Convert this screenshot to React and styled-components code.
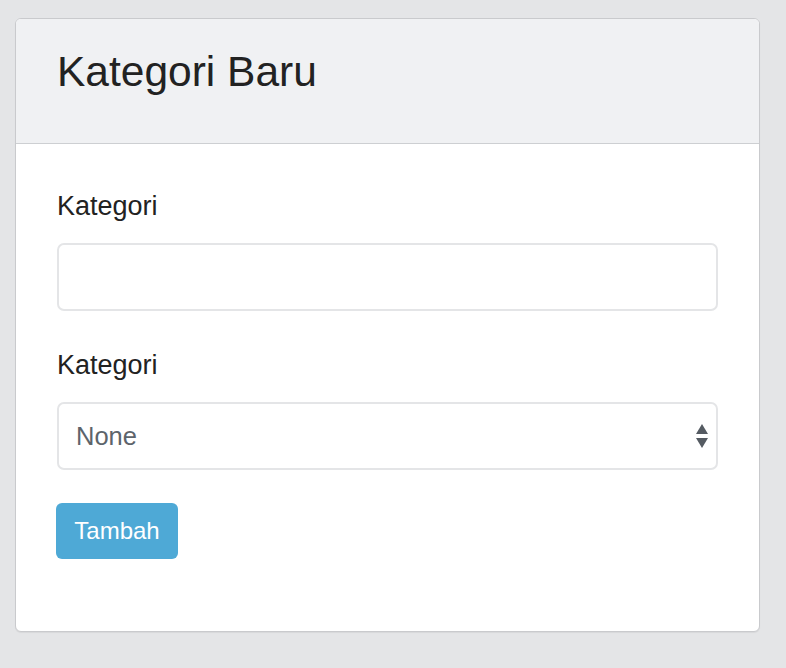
import React from 'react';
import styled, { createGlobalStyle } from 'styled-components';

const GlobalStyle = createGlobalStyle`
  html, body {
    margin: 0;
    padding: 0;
    background-color: #e4e5e7;
    font-family: "Liberation Sans", Arial, sans-serif;
    color: #212529;
  }
`;

const Page = styled.div`
  padding: 18px 26px 35px 15px;
`;

const Card = styled.div`
  width: 745px;
  box-sizing: border-box;
  background-color: white;
  border: 1px solid #c9cacd;
  border-radius: 6px;
  box-shadow: 0 1px 1px rgba(0, 0, 0, 0.06);
  overflow: hidden;
`;

const CardHeader = styled.div`
  height: 125px;
  box-sizing: border-box;
  padding: 27px 41px 0;
  background-color: #f0f1f3;
  border-bottom: 1px solid #cdcfd2;
`;

const Title = styled.h3`
  margin: 0;
  font-size: 42.5px;
  font-weight: 400;
  line-height: 1.2;
  color: #222;
`;

const CardBody = styled.div`
  padding: 43px 41px 72px;
`;

const FormGroup = styled.div`
  margin-bottom: ${props => props.last ? '33px' : '35px'};
`;

const Label = styled.label`
  display: block;
  font-size: 27px;
  line-height: 39px;
  margin-bottom: 17px;
  color: #222;
`;

const fieldStyles = `
  display: block;
  width: 100%;
  height: 68px;
  box-sizing: border-box;
  border: 2px solid #e4e5e7;
  border-radius: 7px;
  background-color: white;
  font-family: "Liberation Sans", Arial, sans-serif;
  font-size: 25.5px;
  color: #5d646b;
  padding: 0 17px;
  outline: none;
`;

const Input = styled.input`
  ${fieldStyles}
`;

const SelectWrap = styled.div`
  position: relative;
`;

const Select = styled.select`
  ${fieldStyles}
  appearance: none;
  -webkit-appearance: none;
`;

const Arrows = styled.svg`
  position: absolute;
  right: 9px;
  top: 22px;
  pointer-events: none;
`;

const Button = styled.button`
  display: block;
  width: 122px;
  height: 56px;
  margin-left: -1px;
  border: none;
  border-radius: 6px;
  background-color: #4ea9d6;
  color: white;
  font-family: "Liberation Sans", Arial, sans-serif;
  font-size: 24px;
  padding: 0;
  cursor: pointer;
`;

const App = () => {
  return (
    <>
      <GlobalStyle />
      <Page>
        <Card>
          <CardHeader>
            <Title>Kategori Baru</Title>
          </CardHeader>
          <CardBody>
            <FormGroup>
              <Label>Kategori</Label>
              <Input type="text" />
            </FormGroup>
            <FormGroup last>
              <Label>Kategori</Label>
              <SelectWrap>
                <Select defaultValue="none">
                  <option value="none">None</option>
                </Select>
                <Arrows width="14" height="24" viewBox="0 0 14 24">
                  <path d="M7 0 L13 10 L1 10 Z" fill="#555b62" />
                  <path d="M1 14 L13 14 L7 24 Z" fill="#555b62" />
                </Arrows>
              </SelectWrap>
            </FormGroup>
            <Button>Tambah</Button>
          </CardBody>
        </Card>
      </Page>
    </>
  );
};

export default App;
